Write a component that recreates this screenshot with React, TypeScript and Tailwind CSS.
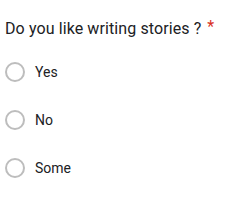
export default function App() {
  const options = ["Yes", "No", "Some"];
  return (
    <div className="w-[241px] h-[201px] bg-white pl-[5px] pt-[19px]">
      <div className="text-[16px] leading-[20px] text-[#202124] tracking-[0.1px] font-['Roboto',sans-serif]">
        Do you like writing stories ?
        <span className="relative -top-[2px] text-[#d93025] ml-[6px]">*</span>
      </div>
      <div className="mt-[23px] flex flex-col gap-[28px]">
        {options.map((o) => (
          <label key={o} className="flex items-center h-[20px]">
            <span className="w-[20px] h-[20px] rounded-full border-2 border-[#bdbdbd] box-border" />
            <span className="ml-[10px] text-[14px] text-[#202124] font-['Roboto',sans-serif]">{o}</span>
          </label>
        ))}
      </div>
    </div>
  );
}
